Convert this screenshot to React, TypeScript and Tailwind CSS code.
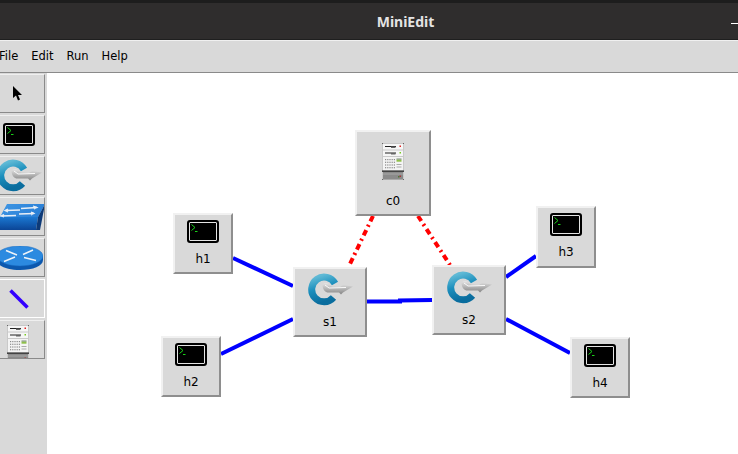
import React from "react";

const UI = "font-['DejaVu_Sans',sans-serif]";

function Terminal() {
  return (
    <svg width="32" height="23" viewBox="0 0 32 23" className="block shrink-0">
      <rect x="0" y="0" width="32" height="23" rx="3" fill="#000" />
      <rect x="2.5" y="2.5" width="27" height="18" rx="0.5" fill="#000" stroke="#e4e4e4" strokeWidth="1" />
      <path d="M4.5 4.5 L8 7.5 L4.5 10.5" fill="none" stroke="#19d219" strokeWidth="1" />
      <path d="M8 11.5 H10.5" stroke="#19d219" strokeWidth="1" />
    </svg>
  );
}

function SwitchIcon() {
  return (
    <svg width="45" height="33" viewBox="0 0 45 33" className="block shrink-0">
      <defs>
        <linearGradient id="ring" x1="0.2" y1="0" x2="0.5" y2="1">
          <stop offset="0" stopColor="#5fb9d5" />
          <stop offset="0.45" stopColor="#1c8fbd" />
          <stop offset="1" stopColor="#0a6d9e" />
        </linearGradient>
        <linearGradient id="arrow" x1="0" y1="0" x2="0" y2="1">
          <stop offset="0" stopColor="#e6e6e6" />
          <stop offset="1" stopColor="#858585" />
        </linearGradient>
      </defs>
      <path d="M27 10.5 A12.4 12.4 0 1 0 25.5 24.5" fill="none" stroke="url(#ring)" strokeWidth="7" />
      <path d="M14.5 12.5 C15.5 10 18 9.5 20 10.5 L24 13.5 L32 14 L35 12 L45 13.5 L35 19.5 L33 21.5 L31 19.5 L21 19.5 C18 20 15 17.5 14.5 12.5 Z" fill="url(#arrow)" />
      <path d="M17 12 L21 15 L38 14.5" fill="none" stroke="#fafafa" strokeWidth="1" />
    </svg>
  );
}

function ServerIcon() {
  return (
    <svg width="22" height="37" viewBox="0 0 22 37" className="block shrink-0">
      <rect x="0" y="0" width="22" height="37" fill="#c9c9c9" />
      <rect x="1" y="1" width="20" height="5.5" fill="#f6f6f6" />
      <rect x="3" y="3" width="11" height="1" fill="#222" />
      <rect x="9" y="3.5" width="4.5" height="1.5" fill="#666" />
      <rect x="17.5" y="2.5" width="1.5" height="1.5" fill="#d22" />
      <rect x="1" y="7.5" width="20" height="5.5" fill="#f6f6f6" />
      <rect x="3" y="9.5" width="11" height="1" fill="#222" />
      <rect x="9" y="10" width="4.5" height="1.5" fill="#666" />
      <rect x="17.5" y="9" width="1.5" height="1.5" fill="#7c2" />
      <rect x="1" y="14" width="20" height="13.5" fill="#f4f4f4" />
      {[0, 1, 2, 3].map((r) =>
        [0, 1, 2, 3, 4].map((c) => (
          <rect key={`${r}-${c}`} x={3 + c * 2.2} y={16 + r * 2.7} width="1.2" height="1.2" fill="#8a8a8a" />
        ))
      )}
      <rect x="14.5" y="15.5" width="5" height="1.2" fill="#7a8a7a" />
      <rect x="14.5" y="16.7" width="5" height="2" fill="#8fc04a" />
      <rect x="14.5" y="21" width="5" height="1" fill="#aaa" />
      <rect x="14.5" y="23.5" width="5" height="1" fill="#aaa" />
      <rect x="0" y="27.5" width="22" height="1.3" fill="#222" />
      <rect x="1" y="29" width="20" height="7.5" fill="#8a8a8a" />
      <rect x="1" y="30.5" width="20" height="1" fill="#a8a8a8" />
      <rect x="16" y="33" width="1.5" height="1.5" fill="#4a7a3a" />
      <rect x="17.5" y="32.5" width="1.5" height="1.5" fill="#a33" />
      <rect x="0" y="0" width="1" height="1" fill="#666" />
      <rect x="21" y="0" width="1" height="1" fill="#666" />
      <rect x="0" y="36" width="1" height="1" fill="#666" />
      <rect x="21" y="36" width="1" height="1" fill="#666" />
    </svg>
  );
}

function LegacySwitch() {
  return (
    <svg width="45" height="26" viewBox="0 0 45 26" className="block shrink-0">
      <defs>
        <linearGradient id="ls" x1="0" y1="0" x2="1" y2="0.4">
          <stop offset="0" stopColor="#3f96e4" />
          <stop offset="1" stopColor="#2a7fd6" />
        </linearGradient>
        <linearGradient id="lf" x1="0" y1="0" x2="0" y2="1">
          <stop offset="0" stopColor="#1b78d2" />
          <stop offset="1" stopColor="#0b4596" />
        </linearGradient>
      </defs>
      <path d="M7 0 H45 L38 13 H0 Z" fill="url(#ls)" />
      <path d="M0 13 H38 L36 26 H0 Z" fill="url(#lf)" />
      <path d="M38 13 L45 0 L40 26 L36 26 Z" fill="#0d3a78" />
      <path d="M21 4.5 L37 3.5 M33 2 L37 3.5 L34 5" stroke="#e8eef6" strokeWidth="1.3" fill="none" />
      <path d="M19 10 L34 9.5 M31 8 L34 9.5 L31 11" stroke="#e8eef6" strokeWidth="1.3" fill="none" />
      <path d="M20 6 L5 6.5 M8 5 L5 6.5 L8 8" stroke="#e8eef6" strokeWidth="1.3" fill="none" />
      <path d="M16 11.5 L1 12 M4 10.5 L1 12 L4 13" stroke="#e8eef6" strokeWidth="1.3" fill="none" />
    </svg>
  );
}

function RouterIcon() {
  return (
    <svg width="46" height="24" viewBox="0 0 46 24" className="block shrink-0">
      <path d="M0 10 V14 C0 20 10 24 23 24 C36 24 46 20 46 14 V10 Z" fill="#0c58ae" />
      <ellipse cx="23" cy="10" rx="23" ry="10" fill="#2c8ae0" stroke="#1668bf" strokeWidth="0.5" />
      <path d="M9 4.5 L20 9 M36 4 L26 8.5 M7 15.5 L18 11 M27 11.5 L39 14.5" stroke="#eef3f8" strokeWidth="1.5" fill="none" />
    </svg>
  );
}

function ToolButton({ children, className = "", active = false }: { children: React.ReactNode; className?: string; active?: boolean }) {
  return (
    <div
      className={`h-[39px] w-[45px] overflow-hidden bg-[#d9d9d9] border-t border-r border-b flex ${
        active ? "border-t-white border-r-white border-b-white" : "border-t-[#efefef] border-r-[#8a8a8a] border-b-[#8a8a8a]"
      } ${className}`}
    >
      {children}
    </div>
  );
}

function Node({ label, className, children, labelClass }: { label: string; className: string; children: React.ReactNode; labelClass: string }) {
  return (
    <div
      className={`absolute bg-[#d9d9d9] border-2 border-t-[#f1f1f1] border-l-[#f1f1f1] border-r-[#8e8e8e] border-b-[#8e8e8e] flex flex-col items-center ${className}`}
    >
      {children}
      <span className={`text-[12px] leading-[14px] text-black ${labelClass}`}>{label}</span>
    </div>
  );
}

export default function App() {
  return (
    <div className={`w-[738px] h-[454px] overflow-hidden flex flex-col bg-white ${UI}`}>
      <header className="h-[40px] shrink-0 bg-[#2f2d2d] border-t-[3px] border-t-[#1d1d1d] border-b border-b-[#1f1f1f] relative flex items-center justify-center">
        <span className="text-[14px] font-bold text-[#e4e4e4] font-['Noto_Sans',sans-serif] ml-[73px]">MiniEdit</span>
        <div className="absolute right-0 top-[20px] w-[7px] h-[1px] bg-white" />
      </header>
      <nav className="h-[33px] shrink-0 bg-[#d9d9d9] border-t border-t-[#f0f0f0] border-b border-b-[#8a8a8a] flex items-center text-[11.5px] text-black gap-[13px]">
        <span className="-ml-px">File</span>
        <span>Edit</span>
        <span>Run</span>
        <span>Help</span>
      </nav>
      <div className="flex-1 flex min-h-0">
        <aside className="w-[47px] shrink-0 bg-[#d9d9d9] flex flex-col gap-[2px] pt-[1px]">
          <ToolButton className="items-center pl-[13px]">
            <svg width="9" height="15" viewBox="0 0 9 15" className="block">
              <path d="M0 0 V12 L3 9.5 L5 14.5 L7 13.5 L5 9 H9 Z" fill="#000" />
            </svg>
          </ToolButton>
          <ToolButton className="items-center pl-[3px]"><Terminal /></ToolButton>
          <ToolButton className="items-center"><div className="-ml-[3px]"><SwitchIcon /></div></ToolButton>
          <ToolButton className="items-center"><LegacySwitch /></ToolButton>
          <ToolButton className="items-center"><div className="-ml-[3px]"><RouterIcon /></div></ToolButton>
          <ToolButton active className="items-center pl-[9px]">
            <svg width="20" height="20" viewBox="0 0 20 20" className="block">
              <path d="M1.5 1.5 L18.5 18.5" stroke="#3300ff" strokeWidth="3.5" />
            </svg>
          </ToolButton>
          <ToolButton className="pl-[7px] pt-[4px]"><ServerIcon /></ToolButton>
        </aside>
        <main className="relative flex-1">
          <svg className="absolute inset-0" width="691" height="381" viewBox="47 73 691 381">
            <g stroke="#0000ff" strokeWidth="4" fill="none">
              <path d="M233 258 L293 286" />
              <path d="M221 354 L293 319" />
              <path d="M367 301.5 L400 301.5 L400 300.5 L432 300" />
              <path d="M506 277 L536 256" />
              <path d="M506 319 L570 353" />
            </g>
            <g stroke="#ff0000" strokeWidth="4" fill="none" strokeDasharray="6 3.8 2 3.8">
              <path d="M373 216 L349 266" />
              <path d="M418 216 L450 265" />
            </g>
          </svg>
          <Node label="c0" labelClass="mt-[14px]" className="left-[308px] top-[57px] w-[76px] h-[86px] pt-[11px]"><ServerIcon /></Node>
          <Node label="h1" labelClass="mt-[9px]" className="left-[126px] top-[140px] w-[60px] h-[61px] pt-[5px]"><Terminal /></Node>
          <Node label="h2" labelClass="mt-[9px]" className="left-[114px] top-[263px] w-[60px] h-[61px] pt-[5px]"><Terminal /></Node>
          <Node label="h3" labelClass="mt-[9px]" className="left-[489px] top-[133px] w-[60px] h-[62px] pt-[5px]"><Terminal /></Node>
          <Node label="h4" labelClass="mt-[9px]" className="left-[523px] top-[264px] w-[60px] h-[61px] pt-[5px]"><Terminal /></Node>
          <Node label="s1" labelClass="mt-[9px]" className="left-[246px] top-[194px] w-[74px] h-[70px] pt-[4px]"><SwitchIcon /></Node>
          <Node label="s2" labelClass="mt-[9px]" className="left-[385px] top-[192px] w-[74px] h-[70px] pt-[4px]"><SwitchIcon /></Node>
        </main>
      </div>
    </div>
  );
}
